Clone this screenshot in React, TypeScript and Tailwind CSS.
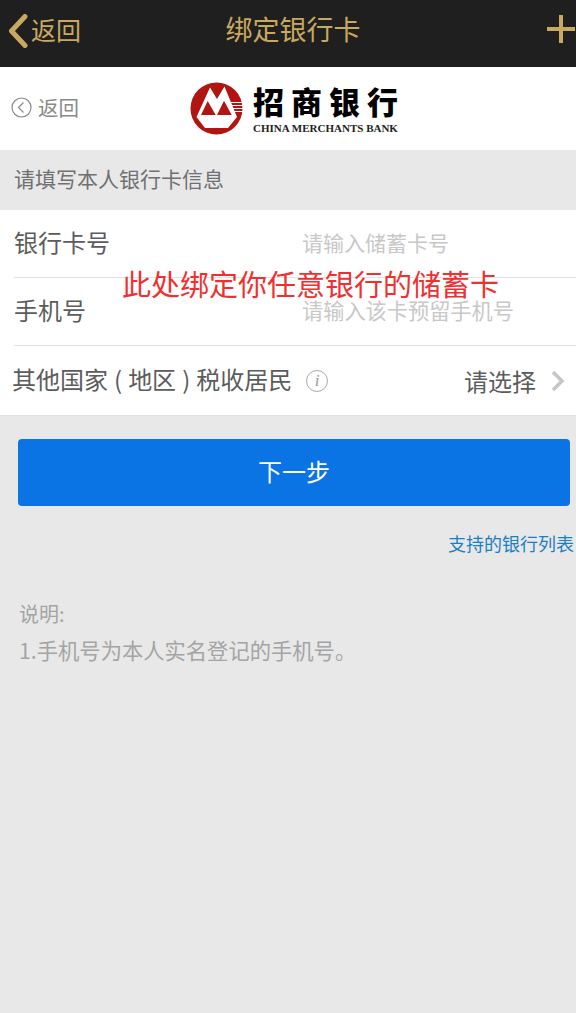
const cjk = "font-['Noto_Sans_CJK_SC','Liberation_Sans',sans-serif]";

function Logo() {
  return (
    <div className="flex items-center gap-[10px]">
      <svg width="53" height="53" viewBox="0 0 53 53">
        <circle cx="26.5" cy="26.5" r="26" fill="#b01512" />
        <path d="M6.5 35 L20 5.5 L27 17 L34.5 4.5 L47 35 L38 46 L15 46 Z" fill="#fff" />
        <path d="M11 33 L17.7 19 L25.7 33 Z M27 33 L34 18.7 L41.7 33 Z" fill="#b01512" />
        <path d="M40 20.5h13M41 23.5h12M42 26.5h11M43 29.5h10" stroke="#fff" strokeWidth="1.1" />
      </svg>
      <div className="flex flex-col items-center">
        <div className="flex gap-[7px] text-[31px] leading-[36px] font-black text-black font-['Noto_Sans_CJK_SC',sans-serif]">
          <span>招</span><span>商</span><span>银</span><span>行</span>
        </div>
        <div className="text-[11px] leading-[12px] mt-[3px] font-bold text-[#222] whitespace-nowrap font-['Liberation_Serif',serif]">CHINA MERCHANTS BANK</div>
      </div>
    </div>
  );
}

export default function App() {
  return (
    <div className={`relative w-[576px] h-[1013px] overflow-hidden bg-[#e8e8e8] ${cjk}`}>
      <header className="h-[67px] bg-[#1f1f1f] text-[#c9a860] flex items-center justify-between">
        <div className="flex items-center pl-[8px] pb-[8px]">
          <svg width="20" height="34" viewBox="0 0 20 34" fill="none" className="mt-[2px]">
            <path d="M17 2.5 L3.5 17 L17 31.5" stroke="#c9a860" strokeWidth="5" strokeLinecap="round" strokeLinejoin="round" />
          </svg>
          <span className="text-[25px] leading-none ml-[3px]">返回</span>
        </div>
        <span className="text-[27px] leading-none ml-[-41px] pb-[10px]">绑定银行卡</span>
        <svg width="30" height="30" viewBox="0 0 30 30" className="mb-[9px]">
          <path d="M1 15 H29 M15 1 V29" stroke="#c9a860" strokeWidth="4" />
        </svg>
      </header>

      <div className="relative h-[83px] bg-white flex items-center justify-center">
        <div className="absolute left-[11px] top-[30px] flex items-center gap-[6px] text-[#8a8a8a]">
          <svg width="21" height="21" viewBox="0 0 21 21" fill="none">
            <circle cx="10.5" cy="10.5" r="9.5" stroke="#8a8a8a" strokeWidth="1.2" />
            <path d="M12.5 5.5 L7.5 10.5 L12.5 15.5" stroke="#8a8a8a" strokeWidth="1.2" />
          </svg>
          <span className="text-[20.5px] leading-none">返回</span>
        </div>
        <div className="ml-[12px]"><Logo /></div>
      </div>

      <div className="h-[60px] flex items-center pl-[14px] pb-[2px] text-[21px] text-[#707070]">请填写本人银行卡信息</div>

      <section className="bg-white h-[206px] border-b border-[#e2e2e2] text-[#5c5c5c]">
        <div className="h-[68px] ml-[14px] border-b border-[#e2e2e2] flex items-center pb-[3px]">
          <span className="w-[288px] text-[24px] leading-none">银行卡号</span>
          <span className="text-[21px] leading-none text-[#c8c8c8]">请输入储蓄卡号</span>
        </div>
        <div className="h-[68px] ml-[14px] border-b border-[#e2e2e2] flex items-center pb-[3px]">
          <span className="w-[288px] text-[24px] leading-none">手机号</span>
          <span className="text-[21.2px] leading-none text-[#c8c8c8] whitespace-nowrap">请输入该卡预留手机号</span>
        </div>
        <div className="h-[69px] pl-[12px] flex items-center">
          <span className="flex items-center gap-[6px] w-[278px] text-[24px] leading-none whitespace-nowrap pb-[4px]">
            <span>其他国家</span>
            <span>(</span>
            <span>地区</span>
            <span>)</span>
            <span>税收居民</span>
          </span>
          <span className="ml-[16px] w-[22px] h-[22px] rounded-full border-[1.5px] border-[#aaa] flex items-center justify-center text-[17px] italic text-[#999] font-['Liberation_Serif',serif]">i</span>
          <span className="ml-[136px] text-[24px] leading-none whitespace-nowrap">请选择</span>
          <svg width="14" height="22" viewBox="0 0 14 22" fill="none" className="ml-[15px]">
            <path d="M2 2 L11 11 L2 20" stroke="#c6c6c6" strokeWidth="3.5" />
          </svg>
        </div>
      </section>

      <button className="block ml-[18px] mt-[23px] w-[552px] h-[67px] rounded-[4px] bg-[#0a74e4] text-white text-[24px] leading-none pb-[4px]">下一步</button>

      <div className="text-right pr-[2px] mt-[25px] text-[18px] leading-[24px] text-[#1b7fc4]">支持的银行列表</div>
      <div className="pl-[19px] mt-[41px] text-[21.3px] leading-[36px] text-[#a4a4a4]">
        <div className="text-[20px]">说明:</div>
        <div>1.手机号为本人实名登记的手机号。</div>
      </div>

      <div className="absolute left-[122px] top-[266px] text-[29px] leading-[34px] text-[#f03030] whitespace-nowrap">此处绑定你任意银行的储蓄卡</div>
    </div>
  );
}
